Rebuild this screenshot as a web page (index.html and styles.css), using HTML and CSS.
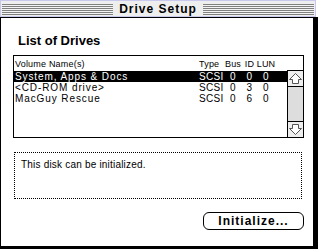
FILE: index.html
```html
<!DOCTYPE html>
<html lang="en">
<head>
  <meta charset="UTF-8">
  <title>Drive Setup</title>
  <link rel="stylesheet" href="styles.css">
</head>
<body>

<div class="titlebar">
  <div class="stripes"></div>
  <div class="title">Drive Setup</div>
  <div class="stripes"></div>
</div>

<div class="window">
  <h1>List of Drives</h1>

  <div class="drive-list">
    <div class="list-head cols">
      <span>Volume Name(s)</span>
      <span>Type</span>
      <span class="c">Bus</span>
      <span class="c">ID</span>
      <span class="c">LUN</span>
    </div>
    <div class="list-body">
      <div class="rows">
        <div class="row cols selected">
          <span>System, Apps &amp; Docs</span><span class="val">SCSI</span><span class="c val">0</span><span class="c val">0</span><span class="c val">0</span>
        </div>
        <div class="row cols">
          <span>&lt;CD-ROM drive&gt;</span><span class="val">SCSI</span><span class="c val">0</span><span class="c val">3</span><span class="c val">0</span>
        </div>
        <div class="row cols">
          <span>MacGuy Rescue</span><span class="val">SCSI</span><span class="c val">0</span><span class="c val">6</span><span class="c val">0</span>
        </div>
      </div>
      <div class="scrollbar">
        <div class="arrow up">
          <svg width="15" height="15" viewBox="0 0 15 15"><path d="M7.5 2.5 L13.5 8.5 L10.5 8.5 L10.5 12.5 L4.5 12.5 L4.5 8.5 L1.5 8.5 Z" fill="#fff" stroke="#555" stroke-width="1"/></svg>
        </div>
        <div class="track"></div>
        <div class="arrow down">
          <svg width="15" height="15" viewBox="0 0 15 15"><path d="M7.5 12.5 L13.5 6.5 L10.5 6.5 L10.5 2.5 L4.5 2.5 L4.5 6.5 L1.5 6.5 Z" fill="#fff" stroke="#555" stroke-width="1"/></svg>
        </div>
      </div>
    </div>
  </div>

  <div class="info">This disk can be initialized.</div>

  <div class="actions">
    <button class="btn">Initialize...</button>
  </div>
</div>

</body>
</html>
```

FILE: styles.css
```css
* {
    box-sizing: border-box;
}

body {
    margin: 0;
    background: #fff;
    font-family: "Liberation Sans", Arial, sans-serif;
    width: 318px;
    height: 249px;
    overflow: hidden;
}

/* Title bar */
.titlebar {
    display: flex;
    width: 316px;
    height: 17px;
    border: 1px solid #c8c8ee;
    background: #eeeeee;
    padding: 2px 1px;
}

.stripes {
    flex: 1;
    margin-top: 1px;
    height: 11px;
    background: repeating-linear-gradient(to bottom, #808080 0 1px, #f4f4f4 1px 2px);
}

.title {
    padding: 0 6px;
    font-size: 12px;
    font-weight: bold;
    letter-spacing: 1px;
    line-height: 13px;
    color: #000;
}

/* Window body */
.window {
    width: 318px;
    height: 232px;
    border: 1px solid #000;
    border-right-width: 5px;
    border-bottom-width: 3px;
    padding: 15px 0 0 12px;
}

h1 {
    margin: 0 0 7px 5px;
    font-size: 13px;
    line-height: 15px;
    font-weight: bold;
}

/* Drive list */
.drive-list {
    width: 291px;
    height: 83px;
    border: 1px solid #000;
    display: flex;
    flex-direction: column;
}

.cols {
    display: grid;
    grid-template-columns: 184px 24px 20px 13px 20px;
    padding-left: 1px;
}

.cols .c {
    text-align: center;
}

.list-head {
    height: 14px;
    font-size: 9px;
    line-height: 14px;
    padding-top: 1px;
    letter-spacing: 0.2px;
}

.list-body {
    flex: 1;
    display: flex;
}

.rows {
    flex: 1;
    padding-top: 1px;
}

.row {
    height: 11px;
    font-size: 10px;
    line-height: 12px;
    letter-spacing: 0.9px;
    white-space: nowrap;
}

.row .val {
    letter-spacing: 0.3px;
}

.row.selected {
    background: #000;
    color: #fff;
}

.scrollbar {
    width: 16px;
    border-left: 1px solid #000;
    border-top: 1px solid #000;
    display: flex;
    flex-direction: column;
    background: #dddddd;
}

.arrow {
    height: 16px;
    background: #eeeeee;
}

.arrow svg {
    display: block;
}

.arrow.up {
    border-bottom: 1px solid #000;
}

.arrow.down {
    border-top: 1px solid #000;
}

.track {
    flex: 1;
}

/* Info box */
.info {
    width: 288px;
    height: 47px;
    margin: 14px 0 0 1px;
    border: 1px dotted #000;
    padding: 6px 0 0 6px;
    font-size: 10px;
    line-height: 12px;
    letter-spacing: 0.2px;
}

.actions {
    margin-top: 12px;
    padding-left: 190px;
}

.btn {
    width: 101px;
    height: 18px;
    border: 1px solid #000;
    border-radius: 6px;
    background: #fff;
    font-family: "Liberation Sans", Arial, sans-serif;
    font-size: 12px;
    font-weight: bold;
    letter-spacing: 1px;
    padding: 0;
    color: #000;
}
```
